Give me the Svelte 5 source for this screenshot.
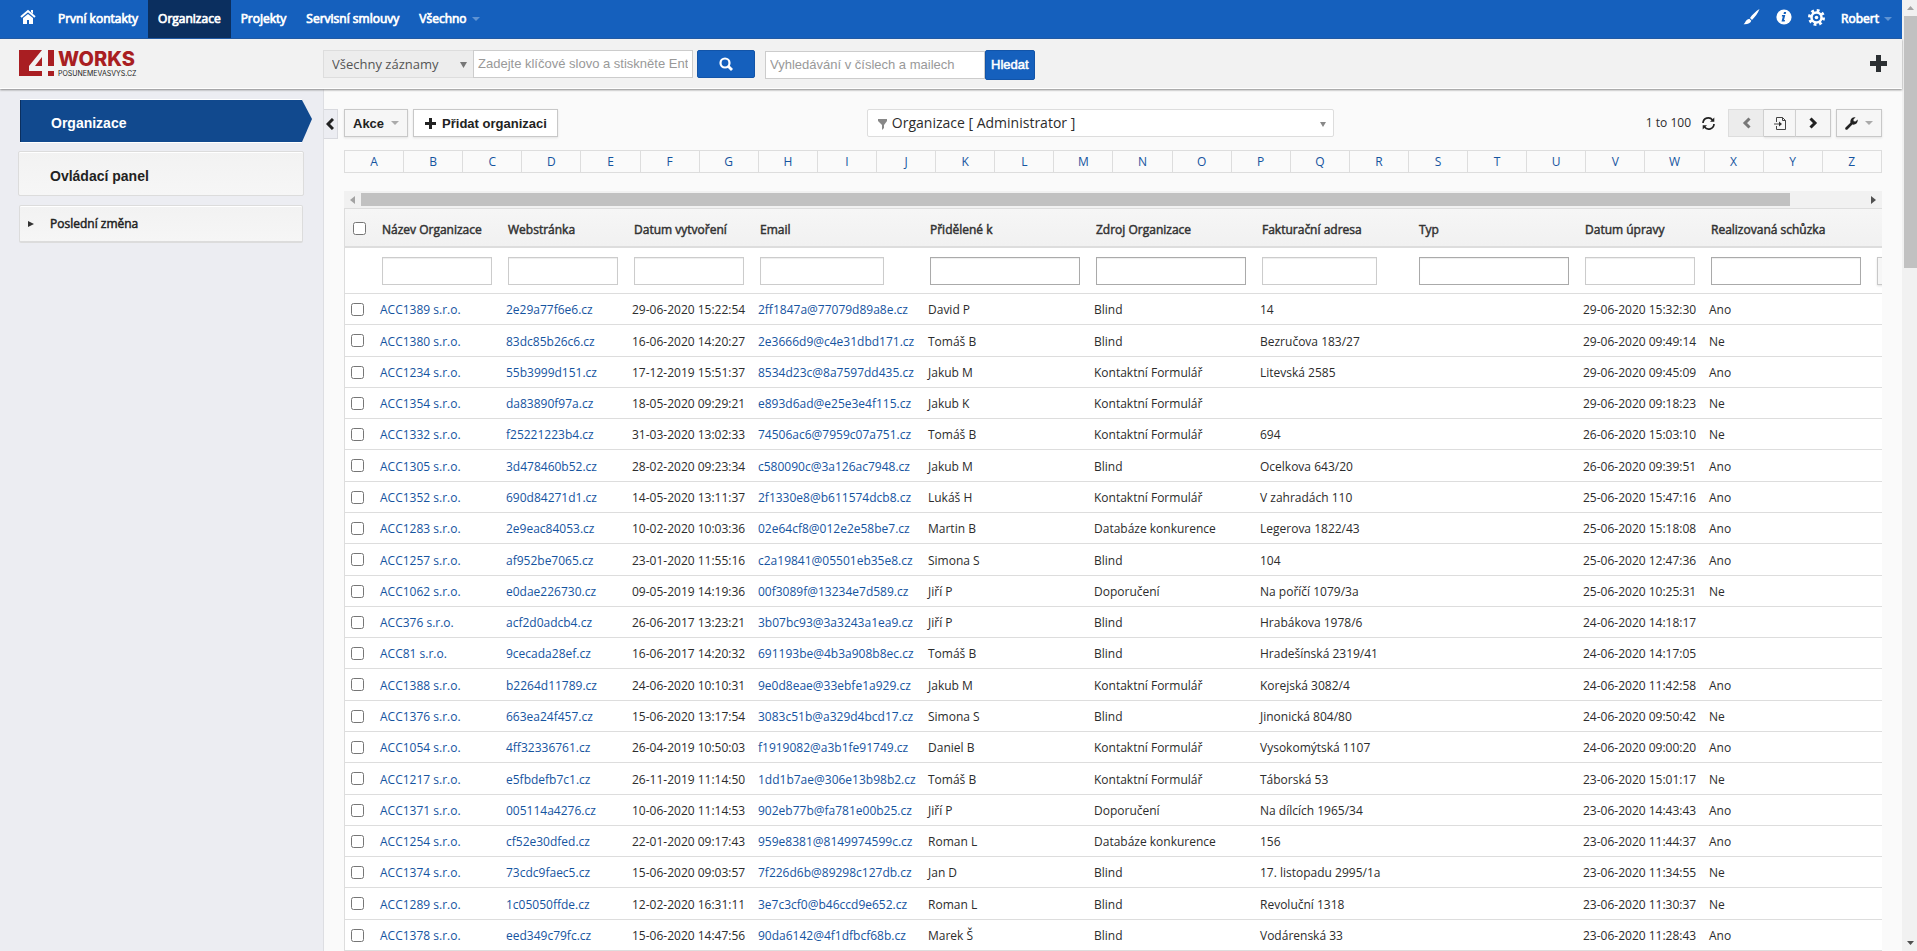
<script>
  const modules = ['První kontakty', 'Organizace', 'Projekty', 'Servisní smlouvy', 'Všechno']
  const letters = 'ABCDEFGHIJKLMNOPQRSTUVWXYZ'.split('')

  let activeModule = $state('Organizace')
  let keyword = $state('')
  let quickSearch = $state('')
  let selected = $state([])

  const columns = [
    { label: 'Název Organizace', input: 'w110' },
    { label: 'Webstránka', input: 'w110' },
    { label: 'Datum vytvoření', input: 'w110' },
    { label: 'Email', input: 'w124' },
    { label: 'Přidělené k', input: 'multi' },
    { label: 'Zdroj Organizace', input: 'multi' },
    { label: 'Fakturační adresa', input: 'w115' },
    { label: 'Typ', input: 'multi' },
    { label: 'Datum úpravy', input: 'w110' },
    { label: 'Realizovaná schůzka', input: 'multi' }
  ]

  const rows = [
    ['ACC1389 s.r.o.', '2e29a77f6e6.cz', '29-06-2020 15:22:54', '2ff1847a@77079d89a8e.cz', 'David P', 'Blind', '14', '', '29-06-2020 15:32:30', 'Ano'],
    ['ACC1380 s.r.o.', '83dc85b26c6.cz', '16-06-2020 14:20:27', '2e3666d9@c4e31dbd171.cz', 'Tomáš B', 'Blind', 'Bezručova 183/27', '', '29-06-2020 09:49:14', 'Ne'],
    ['ACC1234 s.r.o.', '55b3999d151.cz', '17-12-2019 15:51:37', '8534d23c@8a7597dd435.cz', 'Jakub M', 'Kontaktní Formulář', 'Litevská 2585', '', '29-06-2020 09:45:09', 'Ano'],
    ['ACC1354 s.r.o.', 'da83890f97a.cz', '18-05-2020 09:29:21', 'e893d6ad@e25e3e4f115.cz', 'Jakub K', 'Kontaktní Formulář', '', '', '29-06-2020 09:18:23', 'Ne'],
    ['ACC1332 s.r.o.', 'f25221223b4.cz', '31-03-2020 13:02:33', '74506ac6@7959c07a751.cz', 'Tomáš B', 'Kontaktní Formulář', '694', '', '26-06-2020 15:03:10', 'Ne'],
    ['ACC1305 s.r.o.', '3d478460b52.cz', '28-02-2020 09:23:34', 'c580090c@3a126ac7948.cz', 'Jakub M', 'Blind', 'Ocelkova 643/20', '', '26-06-2020 09:39:51', 'Ano'],
    ['ACC1352 s.r.o.', '690d84271d1.cz', '14-05-2020 13:11:37', '2f1330e8@b611574dcb8.cz', 'Lukáš H', 'Kontaktní Formulář', 'V zahradách 110', '', '25-06-2020 15:47:16', 'Ano'],
    ['ACC1283 s.r.o.', '2e9eac84053.cz', '10-02-2020 10:03:36', '02e64cf8@012e2e58be7.cz', 'Martin B', 'Databáze konkurence', 'Legerova 1822/43', '', '25-06-2020 15:18:08', 'Ano'],
    ['ACC1257 s.r.o.', 'af952be7065.cz', '23-01-2020 11:55:16', 'c2a19841@05501eb35e8.cz', 'Simona S', 'Blind', '104', '', '25-06-2020 12:47:36', 'Ano'],
    ['ACC1062 s.r.o.', 'e0dae226730.cz', '09-05-2019 14:19:36', '00f3089f@13234e7d589.cz', 'Jiří P', 'Doporučení', 'Na poříčí 1079/3a', '', '25-06-2020 10:25:31', 'Ne'],
    ['ACC376 s.r.o.', 'acf2d0adcb4.cz', '26-06-2017 13:23:21', '3b07bc93@3a3243a1ea9.cz', 'Jiří P', 'Blind', 'Hrabákova 1978/6', '', '24-06-2020 14:18:17', ''],
    ['ACC81 s.r.o.', '9cecada28ef.cz', '16-06-2017 14:20:32', '691193be@4b3a908b8ec.cz', 'Tomáš B', 'Blind', 'Hradešínská 2319/41', '', '24-06-2020 14:17:05', ''],
    ['ACC1388 s.r.o.', 'b2264d11789.cz', '24-06-2020 10:10:31', '9e0d8eae@33ebfe1a929.cz', 'Jakub M', 'Kontaktní Formulář', 'Korejská 3082/4', '', '24-06-2020 11:42:58', 'Ano'],
    ['ACC1376 s.r.o.', '663ea24f457.cz', '15-06-2020 13:17:54', '3083c51b@a329d4bcd17.cz', 'Simona S', 'Blind', 'Jinonická 804/80', '', '24-06-2020 09:50:42', 'Ne'],
    ['ACC1054 s.r.o.', '4ff32336761.cz', '26-04-2019 10:50:03', 'f1919082@a3b1fe91749.cz', 'Daniel B', 'Kontaktní Formulář', 'Vysokomýtská 1107', '', '24-06-2020 09:00:20', 'Ano'],
    ['ACC1217 s.r.o.', 'e5fbdefb7c1.cz', '26-11-2019 11:14:50', '1dd1b7ae@306e13b98b2.cz', 'Tomáš B', 'Kontaktní Formulář', 'Táborská 53', '', '23-06-2020 15:01:17', 'Ne'],
    ['ACC1371 s.r.o.', '005114a4276.cz', '10-06-2020 11:14:53', '902eb77b@fa781e00b25.cz', 'Jiří P', 'Doporučení', 'Na dílcích 1965/34', '', '23-06-2020 14:43:43', 'Ano'],
    ['ACC1254 s.r.o.', 'cf52e30dfed.cz', '22-01-2020 09:17:43', '959e8381@8149974599c.cz', 'Roman L', 'Databáze konkurence', '156', '', '23-06-2020 11:44:37', 'Ano'],
    ['ACC1374 s.r.o.', '73cdc9faec5.cz', '15-06-2020 09:03:57', '7f226d6b@89298c127db.cz', 'Jan D', 'Blind', '17. listopadu 2995/1a', '', '23-06-2020 11:34:55', 'Ne'],
    ['ACC1289 s.r.o.', '1c05050ffde.cz', '12-02-2020 16:31:11', '3e7c3cf0@b46ccd9e652.cz', 'Roman L', 'Blind', 'Revoluční 1318', '', '23-06-2020 11:30:37', 'Ne'],
    ['ACC1378 s.r.o.', 'eed349c79fc.cz', '15-06-2020 14:47:56', '90da6142@4f1dfbcf68b.cz', 'Marek Š', 'Blind', 'Vodárenská 33', '', '23-06-2020 11:28:43', 'Ano']
  ]

  // name, website and email columns are links
  const linkColumns = [0, 1, 3]

  function toggleAll(event) {
    selected = event.target.checked ? rows.map((row) => row[0]) : []
  }
</script>

{#snippet caret()}
  <svg class="caret" width="8" height="4" viewBox="0 0 8 4" aria-hidden="true"><path d="M0 0h8L4 4z" /></svg>
{/snippet}

<div class="window">
  <div class="page">
    <nav class="navbar">
      <a class="home" href="#home" aria-label="Domů">
        <svg width="16" height="16" viewBox="0 0 16 16" aria-hidden="true">
          <path d="M1 8l7-6 7 6" fill="none" stroke="#fff" stroke-width="2" />
          <path d="M11 1h2v4l-2-2zM3 9l5-4 5 4v6H9v-4H7v4H3z" fill="#fff" />
        </svg>
      </a>
      {#each modules as name}
        <a class="module faux-bold" class:active={name === activeModule} href="#{name}" onclick={() => (activeModule = name)}>
          {name}{#if name === 'Všechno'}{@render caret()}{/if}
        </a>
      {/each}
      <div class="nav-right">
        <a href="#theme" aria-label="Vzhled">
          <svg width="17" height="16" viewBox="0 0 17 16" aria-hidden="true">
            <path d="M16.500 0C13 2 9 6 7 9l2 2c3-3 6-7 7.500-11zM6.300 9.700l2 2C7.500 14 5 15.500 0.500 15.200 2.500 14 2.500 10.500 6.300 9.700z" fill="#fff" />
          </svg>
        </a>
        <a href="#info" aria-label="Informace">
          <svg width="16" height="16" viewBox="0 0 16 16" aria-hidden="true">
            <circle cx="8" cy="8" r="7.600" fill="#fff" />
            <path d="M8 3h2.200l-.5 2H7.500zM6 6h3.300L8 11h1l-.3 1.500H5.500L6.800 7.500h-1z" fill="#1560bd" />
          </svg>
        </a>
        <a href="#settings" aria-label="Nastavení">
          <svg width="17" height="17" viewBox="0 0 17 17" aria-hidden="true">
            <circle cx="8.500" cy="8.500" r="7" fill="none" stroke="#fff" stroke-width="3" stroke-dasharray="2.750 2.750" />
            <circle cx="8.500" cy="8.500" r="5" fill="none" stroke="#fff" stroke-width="2.500" />
            <circle cx="8.500" cy="8.500" r="1.800" fill="#fff" />
          </svg>
        </a>
        <a class="user faux-bold" href="#user">Robert{@render caret()}</a>
      </div>
    </nav>

    <header class="searchbar">
      <a class="logo" href="#home" aria-label="4 Works">
        <svg width="140" height="30" viewBox="0 0 140 30">
          <path d="M0 0h23L10 16v5h13v5H0zM23 7v9h-7z" fill="#a91e22" />
          <path d="M29 0h6v16h-6zM29 21h6v5h-6z" fill="#a91e22" />
          <text class="works" x="39" y="16">WORKS</text>
          <text class="motto" x="39" y="26">POSUNEMEVASVYS.CZ</text>
        </svg>
      </a>
      <div class="record-select">
        <select aria-label="Modul">
          <option>Všechny záznamy</option>
        </select>
        <svg width="7" height="6" viewBox="0 0 7 6" aria-hidden="true"><path d="M0 0h7L3.500 6z" fill="#777" /></svg>
      </div>
      <input class="keyword" type="text" aria-label="Klíčové slovo" placeholder="Zadejte klíčové slovo a stiskněte Enter" bind:value={keyword} />
      <button class="search-button" aria-label="Vyhledat">
        <svg width="14" height="14" viewBox="0 0 14 14" aria-hidden="true">
          <circle cx="6" cy="6" r="4.500" fill="none" stroke="#fff" stroke-width="2.200" />
          <path d="M9 9l4 4" stroke="#fff" stroke-width="2.800" />
        </svg>
      </button>
      <input class="quick" type="text" aria-label="Rychlé hledání" placeholder="Vyhledávání v číslech a mailech" bind:value={quickSearch} />
      <button class="find-button faux-bold">Hledat</button>
      <button class="quick-add" aria-label="Přidat">
        <svg width="17" height="17" viewBox="0 0 17 17" aria-hidden="true"><path d="M6 0h5v6h6v5h-6v6H6v-6H0V6h6z" fill="#2c3033" /></svg>
      </button>
    </header>

    <div class="body">
      <aside class="sidebar">
        <a class="side-item current" href="#list">
          Organizace
          <svg class="tip" width="10" height="42" viewBox="0 0 10 42" aria-hidden="true"><path d="M0 0l10 19L0 42z" fill="#11498e" /></svg>
        </a>
        <a class="side-item" href="#dashboard">Ovládací panel</a>
        <a class="side-item recent faux-bold" href="#recent">
          <svg width="6" height="8" viewBox="0 0 6 8" aria-hidden="true"><path d="M0 1l6 3-6 3z" fill="#333" /></svg>
          Poslední změna
        </a>
      </aside>

      <main class="content">
        <button class="collapse" aria-label="Skrýt panel">
          <svg width="8" height="12" viewBox="0 0 8 12" aria-hidden="true"><path d="M7 1L2 6l5 5" fill="none" stroke="#222" stroke-width="3" /></svg>
        </button>

        <div class="toolbar">
          <button class="btn">Akce{@render caret()}</button>
          <button class="btn add">
            <svg width="11" height="11" viewBox="0 0 11 11" aria-hidden="true"><path d="M4 0h3v4h4v3H7v4H4V7H0V4h4z" fill="#222" /></svg>
            Přidat organizaci
          </button>
          <div class="view-select">
            <svg class="funnel" width="9" height="11" viewBox="0 0 9 11" aria-hidden="true"><path d="M0 0h9v2L6 6v3l-2 2V6L0 2z" fill="#888" /></svg>
            <select aria-label="Filtr">
              <option>Organizace [ Administrator ]</option>
            </select>
            <svg class="arrow" width="6" height="5" viewBox="0 0 6 5" aria-hidden="true"><path d="M0 0h6L3 5z" fill="#888" /></svg>
          </div>
          <div class="paging">
            <span>1 to 100</span>
            <button class="refresh" aria-label="Obnovit">
              <svg width="13" height="13" viewBox="0 0 13 13" aria-hidden="true">
                <path d="M1 6a5.300 5.300 0 0 1 9.500-3M12 7a5.300 5.300 0 0 1-9.500 3" fill="none" stroke="#222" stroke-width="1.700" />
                <path d="M12.300 .5v4.300H8zM.7 12.500V8.200H5z" fill="#222" />
              </svg>
            </button>
            <div class="group">
              <button class="btn" disabled aria-label="Předchozí">
                <svg width="9" height="12" viewBox="0 0 9 12" aria-hidden="true"><path d="M7.500 1.500L3 6l4.500 4.500" fill="none" stroke="#777" stroke-width="3" /></svg>
              </button>
              <button class="btn jump" aria-label="Přejít na stránku">
                <svg width="12" height="13" viewBox="0 0 12 13" aria-hidden="true">
                  <path d="M2.500 5V.5h6l3 3v9h-9V9M8.500 .5v3h3M0 7h7" fill="none" stroke="#444" />
                  <path d="M5 4.500L8 7 5 9.500z" fill="#333" />
                </svg>
              </button>
              <button class="btn" aria-label="Další">
                <svg width="9" height="12" viewBox="0 0 9 12" aria-hidden="true"><path d="M1.500 1.500L6 6l-4.500 4.500" fill="none" stroke="#222" stroke-width="3" /></svg>
              </button>
            </div>
            <button class="btn" aria-label="Nástroje">
              <svg width="13" height="13" viewBox="0 0 12 12" aria-hidden="true">
                <path d="M.5 9.700L5 5.200C4.400 2.500 6.500-.2 9.800.3L7.800 2.300 8 4l1.700.2 2-2c.5 3.200-2 5.400-4.900 4.800L2.300 11.500C1 12.500-.5 11 .5 9.700z" fill="#222" />
              </svg>
              {@render caret()}
            </button>
          </div>
        </div>

        <div class="letters">
          {#each letters as letter}
            <a href="#{letter}">{letter}</a>
          {/each}
        </div>

        <div class="hscroll" aria-hidden="true">
          <svg width="5" height="8" viewBox="0 0 5 8"><path d="M5 0v8L0 4z" fill="#a3a3a3" /></svg>
          <div class="track"><div class="thumb"></div></div>
          <svg width="5" height="8" viewBox="0 0 5 8"><path d="M0 0v8l5-4z" fill="#505050" /></svg>
        </div>

        <div class="list">
          <table>
            <colgroup>
              <col class="c-check" />
              <col class="c-text" />
              <col class="c-text" />
              <col class="c-text" />
              <col class="c-email" />
              <col class="c-pick" />
              <col class="c-pick" />
              <col class="c-address" />
              <col class="c-pick" />
              <col class="c-text" />
              <col class="c-pick" />
              <col />
            </colgroup>
            <thead>
              <tr>
                <th><input type="checkbox" aria-label="Vybrat vše" onchange={toggleAll} /></th>
                {#each columns as column}
                  <th class="faux-bold">{column.label}</th>
                {/each}
                <th></th>
              </tr>
              <tr class="filters">
                <td></td>
                {#each columns as column}
                  <td><input class={column.input} type="text" aria-label={column.label} /></td>
                {/each}
                <td><button class="btn filter-button" aria-label="Filtrovat"></button></td>
              </tr>
            </thead>
            <tbody>
              {#each rows as row}
                <tr>
                  <td><input type="checkbox" aria-label={row[0]} value={row[0]} bind:group={selected} /></td>
                  {#each row as value, i}
                    <td>
                      {#if linkColumns.includes(i)}<a href="#{value}">{value}</a>{:else}{value}{/if}
                    </td>
                  {/each}
                  <td></td>
                </tr>
              {/each}
            </tbody>
          </table>
        </div>
      </main>
    </div>
  </div>

  <div class="vscroll" aria-hidden="true">
    <svg width="7" height="4" viewBox="0 0 7 4"><path d="M0 4h7L3.500 0z" fill="#a3a3a3" /></svg>
    <div class="thumb"></div>
    <svg class="down" width="7" height="4" viewBox="0 0 7 4"><path d="M0 0h7L3.500 4z" fill="#505050" /></svg>
  </div>
</div>

<style>
  :global(body) {
    margin: 0;
    font-family: 'Open Sans', 'Noto Sans', sans-serif;
    font-size: 12px;
    line-height: 20px;
    color: #2c2c2c;
    background: #fafafa;
  }

  * {
    box-sizing: border-box;
  }

  a {
    color: #15549f;
    text-decoration: none;
  }

  button {
    cursor: pointer;
  }

  .faux-bold {
    font-weight: 400;
    -webkit-text-stroke: 0.04em currentColor;
  }

  .window {
    display: flex;
    height: 100vh;
    overflow: hidden;
  }

  .page {
    flex: 1;
    min-width: 0;
    display: flex;
    flex-direction: column;
  }

  .caret {
    margin-left: 5px;
    fill: #aaa;
  }

  /* top bar */
  .navbar {
    display: flex;
    flex: none;
    height: 39px;
    background: #1560bd;
    border-bottom: 1px solid #1a57a5;
  }

  .navbar a {
    display: flex;
    align-items: center;
    color: #fff;
  }

  .navbar .faux-bold {
    -webkit-text-stroke-width: 0.06em;
  }

  .navbar .caret {
    fill: #5f93d3;
  }

  .navbar .home {
    padding: 0 12px 4px 20px;
  }

  .navbar .module {
    padding: 0 10px;
  }

  .navbar .module.active {
    background: #0b2f5f;
  }

  .nav-right {
    display: flex;
    gap: 16px;
    margin-left: auto;
    padding-right: 10px;
  }

  .nav-right svg:not(.caret) {
    margin-bottom: 4px;
  }

  /* search header */
  .searchbar {
    position: relative;
    display: flex;
    flex: none;
    align-items: flex-start;
    height: 50px;
    padding: 11px 15px 0 19px;
    background: #f2f2f2;
    border-bottom: 1px solid #fff;
    box-shadow: 0 1px 2px #888;
    z-index: 1;
  }

  .logo {
    width: 304px;
    height: 30px;
  }

  .works {
    font-family: Inter, sans-serif;
    font-size: 20px;
    font-weight: 800;
    fill: #a91e22;
  }

  .motto {
    font-family: Inter, sans-serif;
    font-size: 7px;
    fill: #222;
  }

  .record-select {
    position: relative;
    width: 150px;
  }

  .record-select select {
    width: 100%;
    height: 28px;
    padding: 0 8px;
    border: 1px solid #ddd;
    border-right: 0;
    background: #ededed;
    color: #555;
    font: 13px 'Open Sans', sans-serif;
    appearance: none;
  }

  .record-select svg {
    position: absolute;
    right: 6px;
    top: 12px;
  }

  .searchbar input {
    width: 220px;
    height: 28px;
    padding: 0 4px 2px;
    border: 1px solid #ccc;
    background: #fff;
    font: 13px 'Liberation Sans', Arial, sans-serif;
  }

  .searchbar input::placeholder {
    color: #999;
  }

  .searchbar .quick {
    margin: 1px 0 0 10px;
  }

  .search-button,
  .find-button {
    height: 28px;
    border: 1px solid #1254a8;
    border-radius: 2px;
    background: #1560bd;
    color: #fff;
  }

  .search-button {
    display: flex;
    align-items: center;
    justify-content: center;
    width: 58px;
    margin-left: 4px;
  }

  .find-button {
    height: 30px;
    padding: 0 5px 2px;
    font-family: 'Liberation Sans', Arial, sans-serif;
    font-size: 13px;
  }

  .quick-add {
    margin: 5px 0 0 auto;
    padding: 0;
    border: 0;
    background: none;
    line-height: 0;
  }

  .body {
    display: flex;
    flex: 1;
    min-height: 0;
  }

  /* left panel */
  .sidebar {
    flex: none;
    width: 324px;
    padding: 11px 19px 0 18px;
    background: #ecedf2;
    border-right: 1px solid #dddee2;
  }

  .side-item {
    position: relative;
    display: block;
    margin-bottom: 9px;
    padding: 14px 0 9px 31px;
    border: 1px solid #dcdcdc;
    border-radius: 2px;
    background: linear-gradient(#f2f2f2, #f6f6f6);
    box-shadow: inset 0 1px #fff;
    color: #222;
    font: bold 14px/20px 'Liberation Sans', Arial, sans-serif;
  }

  .side-item.current {
    margin: 0 2px 9px;
    padding: 13px 0 9px 30px;
    border: 0;
    border-left: 1px solid #0b2f5f;
    border-radius: 0;
    background: #11498e;
    box-shadow: 0 -1px #fff, 0 1px #fff;
    color: #fff;
  }

  .tip {
    position: absolute;
    left: 100%;
    top: 0;
  }

  .side-item.recent {
    display: flex;
    align-items: center;
    gap: 16px;
    margin: 0 1px;
    padding: 8px 0 7px 8px;
    border-bottom-width: 2px;
    font: 12px/20px 'Open Sans', sans-serif;
  }

  /* main area */
  .content {
    position: relative;
    flex: 1;
    min-width: 0;
    padding: 20px 20px 0;
    overflow: hidden;
  }

  .collapse {
    position: absolute;
    left: 0;
    top: 20px;
    width: 14px;
    height: 30px;
    padding: 0 2px 0 0;
    border: 1px solid #d8d9de;
    border-left: 0;
    background: #ecedf2;
    line-height: 0;
  }

  .toolbar,
  .paging,
  .group {
    display: flex;
    align-items: center;
  }

  .toolbar {
    gap: 5px;
  }

  .btn {
    display: inline-flex;
    align-items: center;
    height: 28px;
    padding: 0 8px;
    border: 1px solid #c8c8c8;
    background: #f6f6f6;
    box-shadow: 0 1px 2px #e2e2e2;
    color: #222;
    font: bold 13px 'Liberation Sans', Arial, sans-serif;
  }

  .btn .caret {
    margin-left: 7px;
  }

  .btn.add {
    gap: 6px;
    padding: 0 10px 0 11px;
    background: #fff;
  }

  .view-select {
    position: relative;
    flex: 0 1 467px;
    margin-left: 304px;
  }

  .view-select select {
    width: 100%;
    height: 28px;
    padding: 0 24px 1px;
    border: 1px solid #ddd;
    border-radius: 2px;
    background: #fff;
    color: #2c2c2c;
    font: 14px 'Open Sans', sans-serif;
    appearance: none;
  }

  .funnel,
  .arrow {
    position: absolute;
    left: 11px;
    top: 10px;
  }

  .arrow {
    left: auto;
    right: 8px;
    top: 13px;
  }

  .paging {
    gap: 5px;
    margin-left: auto;
  }

  .refresh {
    margin: 0 8px 0 6px;
    padding: 0;
    border: 0;
    background: none;
    line-height: 0;
  }

  .group .btn {
    padding: 0 12px 0 13px;
  }

  .group .btn + .btn {
    border-left: 0;
  }

  .group .btn.jump {
    padding: 0 9px 0 10px;
  }

  .group .btn:disabled {
    background: #ececec;
    border-color: #ddd #c8c8c8 #ddd #ddd;
    box-shadow: none;
  }

  .letters {
    display: flex;
    margin-top: 13px;
    border: 1px solid #ddd;
  }

  .letters a {
    flex: 1;
    line-height: 21px;
    text-align: center;
  }

  .letters a + a {
    border-left: 1px solid #ddd;
  }

  .hscroll {
    display: flex;
    align-items: center;
    gap: 6px;
    height: 17px;
    margin-top: 18px;
    padding: 0 6px;
    background: #f1f1f1;
  }

  .track {
    flex: 1;
  }

  .track .thumb {
    width: 95%;
    height: 13px;
    background: #c1c1c1;
  }

  .list {
    overflow: hidden;
    border-top: 1px solid #ddd;
    border-left: 1px solid #ddd;
    background: #fff;
  }

  table {
    width: 1642px;
    table-layout: fixed;
    border-collapse: separate;
    border-spacing: 0;
  }

  .c-check {
    width: 27px;
  }

  .c-text {
    width: 126px;
  }

  .c-email {
    width: 170px;
  }

  .c-pick {
    width: 166px;
  }

  .c-address {
    width: 157px;
  }

  th,
  td {
    padding: 0 0 0 8px;
    text-align: left;
    vertical-align: middle;
    white-space: nowrap;
  }

  th {
    height: 39px;
    padding: 4px 0 0 10px;
    border-bottom: 2px solid #ddd;
    background: linear-gradient(#f6f6f6, #f1f1f1);
    color: #333;
  }

  th:first-child {
    padding: 2px 0 0 8px;
  }

  .filters td {
    height: 46px;
    padding: 0 0 0 10px;
    border-bottom: 1px solid #ddd;
  }

  .filters input {
    display: block;
    height: 28px;
    border: 1px solid #ccc;
    background: #fff;
    box-shadow: inset 0 1px 1px #eee;
  }

  .filters .w110 {
    width: 110px;
  }

  .filters .w115 {
    width: 115px;
  }

  .filters .w124 {
    width: 124px;
  }

  .filters .multi {
    width: 150px;
    border-color: #aaa;
  }

  .filter-button {
    display: block;
    width: 64px;
  }

  tbody td {
    height: 31px;
    padding-top: 2px;
    border-bottom: 1px solid #ddd;
  }

  tbody tr:nth-child(7n + 2) td,
  tbody tr:nth-child(7n + 6) td {
    height: 32px;
  }

  tbody td:first-child {
    padding: 0 0 0 6px;
  }

  input[type='checkbox'] {
    display: block;
    width: 13px;
    height: 13px;
    margin: 0;
  }

  .vscroll {
    display: flex;
    flex-direction: column;
    align-items: center;
    flex: none;
    width: 15px;
    padding: 6px 0 6px 2px;
    background: #f1f1f1;
  }

  .vscroll .thumb {
    width: 100%;
    height: 252px;
    margin-top: 6px;
    background: #c1c1c1;
  }

  .vscroll .down {
    margin-top: auto;
  }
</style>
